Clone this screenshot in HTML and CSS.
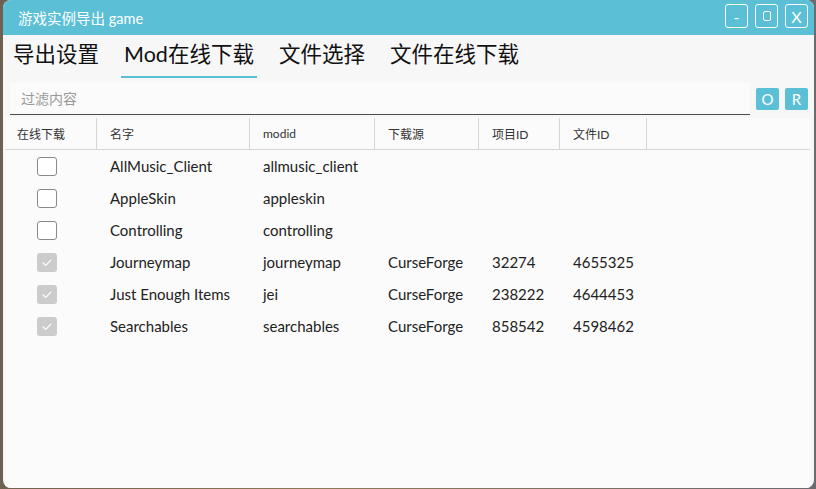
FILE: index.html
```html
<!DOCTYPE html>
<html>
<head>
<meta charset="utf-8">
<link rel="stylesheet" href="styles.css">
</head>
<body>
<div class="window">
  <div class="titlebar">
    <span class="title">游戏实例导出 game</span>
    <div class="winbtns">
      <span class="wbtn">-</span>
      <span class="wbtn"><span class="sq"></span></span>
      <span class="wbtn">X</span>
    </div>
  </div>
  <div class="tabs">
    <span class="tab">导出设置</span>
    <span class="tab active">Mod在线下载</span>
    <span class="tab">文件选择</span>
    <span class="tab">文件在线下载</span>
  </div>
  <div class="filter">
    <div class="input">过滤内容</div>
    <span class="abtn">O</span>
    <span class="abtn">R</span>
  </div>
  <div class="table">
    <div class="row head">
      <div class="c c1">在线下载</div>
      <div class="c c2">名字</div>
      <div class="c c3">modid</div>
      <div class="c c4">下载源</div>
      <div class="c c5">项目ID</div>
      <div class="c c6">文件ID</div>
      <div class="c c7"></div>
    </div>
    <div class="row">
      <div class="c c1"><span class="cb"></span></div>
      <div class="c c2">AllMusic_Client</div>
      <div class="c c3">allmusic_client</div>
      <div class="c c4"></div><div class="c c5"></div><div class="c c6"></div>
    </div>
    <div class="row">
      <div class="c c1"><span class="cb"></span></div>
      <div class="c c2">AppleSkin</div>
      <div class="c c3">appleskin</div>
      <div class="c c4"></div><div class="c c5"></div><div class="c c6"></div>
    </div>
    <div class="row">
      <div class="c c1"><span class="cb"></span></div>
      <div class="c c2">Controlling</div>
      <div class="c c3">controlling</div>
      <div class="c c4"></div><div class="c c5"></div><div class="c c6"></div>
    </div>
    <div class="row">
      <div class="c c1"><span class="cb on"><svg viewBox="0 0 20 20" width="20" height="19"><path d="M5.5 10 L8.6 13 L14.5 7" fill="none" stroke="#fff" stroke-width="1.2"/></svg></span></div>
      <div class="c c2">Journeymap</div>
      <div class="c c3">journeymap</div>
      <div class="c c4">CurseForge</div>
      <div class="c c5">32274</div>
      <div class="c c6">4655325</div>
    </div>
    <div class="row">
      <div class="c c1"><span class="cb on"><svg viewBox="0 0 20 20" width="20" height="19"><path d="M5.5 10 L8.6 13 L14.5 7" fill="none" stroke="#fff" stroke-width="1.2"/></svg></span></div>
      <div class="c c2">Just Enough Items</div>
      <div class="c c3">jei</div>
      <div class="c c4">CurseForge</div>
      <div class="c c5">238222</div>
      <div class="c c6">4644453</div>
    </div>
    <div class="row">
      <div class="c c1"><span class="cb on"><svg viewBox="0 0 20 20" width="20" height="19"><path d="M5.5 10 L8.6 13 L14.5 7" fill="none" stroke="#fff" stroke-width="1.2"/></svg></span></div>
      <div class="c c2">Searchables</div>
      <div class="c c3">searchables</div>
      <div class="c c4">CurseForge</div>
      <div class="c c5">858542</div>
      <div class="c c6">4598462</div>
    </div>
  </div>
</div>
</body>
</html>
```
FILE: styles.css
```css
html, body {
  margin: 0;
  padding: 0;
}
body {
  width: 816px;
  height: 489px;
  background: linear-gradient(90deg, #6e6150 0%, #8a7a58 40%, #6a6a70 100%);
  font-family: Lato, "Noto Sans CJK SC", sans-serif;
  overflow: hidden;
}
.window {
  margin-left: 3px;
  width: 811px;
  height: 488px;
  background: #f7f7f7;
  border-radius: 8px;
  overflow: hidden;
  display: flex;
  flex-direction: column;
}
.titlebar {
  height: 35px;
  flex: none;
  background: #5bbfd6;
  display: flex;
  align-items: center;
  justify-content: space-between;
  padding: 0 6px 0 15px;
  box-sizing: border-box;
}
.title {
  color: #fff;
  font-size: 14.5px;
  margin-top: -1px;
}
.winbtns {
  display: flex;
  gap: 7px;
  margin-top: -3px;
}
.wbtn {
  width: 21px;
  height: 22px;
  border: 1px solid #fff;
  border-radius: 3px;
  color: #fff;
  font-size: 16px;
  display: flex;
  align-items: center;
  justify-content: center;
}
.sq {
  width: 6px;
  height: 8px;
  border: 1.5px solid #fff;
  border-radius: 2px;
}
.tabs {
  height: 43px;
  flex: none;
  display: flex;
  align-items: stretch;
  padding-left: 7px;
  gap: 19px;
}
.tab {
  font-size: 21.5px;
  color: #111;
  padding: 0 3px 7px 3px;
  display: flex;
  align-items: center;
  border-bottom: 2px solid transparent;
}
.tab.active {
  border-bottom-color: #5bbfd6;
}
.filter {
  display: flex;
  flex: none;
  align-items: flex-start;
  padding: 5px 6px 0 7px;
  height: 40px;
  box-sizing: border-box;
}
.input {
  width: 741px;
  height: 32px;
  box-sizing: border-box;
  background: #fbfbfb;
  border-bottom: 1px solid #4a4a4a;
  color: #999;
  font-size: 14px;
  padding: 5px 0 0 11px;
}
.abtn {
  width: 23px;
  height: 22px;
  margin-left: 6px;
  margin-top: 5px;
  background: #5bbfd6;
  color: #fff;
  border-radius: 2px;
  font-size: 15px;
  display: flex;
  align-items: center;
  justify-content: center;
}
.table {
  margin: 0 4px 0 2px;
  background: #fbfbfb;
  flex: 1;
}
.row {
  display: flex;
  height: 32px;
  align-items: center;
}
.row.head {
  height: 32px;
  box-sizing: border-box;
  border-bottom: 1px solid #d6d6d6;
  align-items: stretch;
}
.c {
  box-sizing: border-box;
  padding-left: 13px;
  font-size: 15px;
  color: #222;
  display: flex;
  align-items: center;
  height: 100%;
}
.head .c {
  font-size: 12px;
  color: #333;
  border-right: 1px solid #d6d6d6;
}
.head .c7 { border-right: none; flex: 1; }
.c1 { width: 92px; padding-left: 12px; }
.c2 { width: 153px; }
.c3 { width: 125px; }
.c4 { width: 104px; }
.c5 { width: 81px; }
.c6 { width: 87px; }
.row:not(.head) .c1 { padding-left: 32px; }
.cb {
  width: 20px;
  height: 19px;
  box-sizing: border-box;
  border: 1px solid #8a8a8a;
  border-radius: 3px;
  background: #fff;
}
.cb.on {
  border: none;
  background: #cccccc;
}
.cb svg {
  display: block;
}
```
